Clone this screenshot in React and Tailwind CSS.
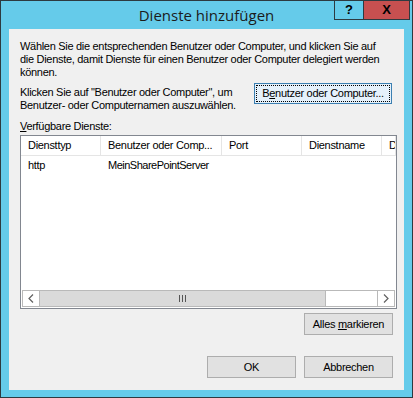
import React from 'react'

function Btn({ children, className = '' }) {
  return (
    <div className={`flex items-center justify-center border border-[#adadad] bg-[#e1e1e1] text-black ${className}`}>
      {children}
    </div>
  )
}

export default function App() {
  const cols = [
    { w: 'w-[80px]', label: 'Diensttyp' },
    { w: 'w-[121px]', label: 'Benutzer oder Comp...' },
    { w: 'w-[80px]', label: 'Port' },
    { w: 'w-[80px]', label: 'Dienstname' },
    { w: 'w-[14px]', label: 'D' },
  ]

  return (
    <div className="w-[413px] h-[398px] bg-white font-['Liberation_Sans',Arial,sans-serif] overflow-hidden">
      <div className="w-[413px] h-[398px] bg-[#65cbea] border border-[#2d3a40] flex flex-col">
        {/* title bar */}
        <div className="h-[28px] shrink-0 flex items-start relative">
          <div className="flex-1 text-center text-[15px] leading-[20px] text-[#1b1b1b] pt-[4px] font-['Open_Sans',sans-serif]">Dienste hinzufügen</div>
          <div className="absolute right-[2px] top-[-1px] flex">
            <div className="w-[29px] h-[20px] border border-[#2d3a40] border-r-0 flex items-center justify-center text-[13px] font-bold text-black">?</div>
            <div className="w-[47px] h-[20px] border border-[#2d3a40] bg-[#c75050] flex items-center justify-center text-[13px] font-bold text-black">X</div>
          </div>
        </div>
        {/* content */}
        <div className="mx-[8px] h-[361px] shrink-0 bg-[#f0f0f0] pl-[11px] pr-[10px] pt-[11px] text-[11px] leading-[13px] tracking-[-0.3px] text-black">
          <p className="whitespace-nowrap">
            Wählen Sie die entsprechenden Benutzer oder Computer, und klicken Sie auf<br />
            die Dienste, damit Dienste für einen Benutzer oder Computer delegiert werden<br />
            können.
          </p>
          <div className="flex justify-between items-start mt-[7px]">
            <p className="whitespace-nowrap">Klicken Sie auf "Benutzer oder Computer", um<br />Benutzer- oder Computernamen auszuwählen.</p>
            <div className="mr-[2px] mt-[-3px] w-[138px] h-[21px] border border-[#3c7fb1] bg-[#e5f1fb] p-[1px]">
              <div className="w-full h-full border border-dotted border-black flex items-center justify-center whitespace-nowrap">
                <span>B<u>e</u>nutzer oder Computer...</span>
              </div>
            </div>
          </div>
          <div className="mt-[8px]"><u>V</u>erfügbare Dienste:</div>
          {/* list view */}
          <div className="mt-[2px] w-[377px] h-[174px] border border-[#828790] bg-white flex flex-col">
            <div className="h-[20px] shrink-0 flex border-b border-[#e5e5e5]">
              {cols.map((c) => (
                <div key={c.label} className={`${c.w} shrink-0 h-full border-r border-[#e5e5e5] pl-[7px] flex items-center overflow-hidden whitespace-nowrap`}>{c.label}</div>
              ))}
            </div>
            <div className="h-[18px] shrink-0 flex items-center whitespace-nowrap">
              <div className="w-[80px] pl-[7px]">http</div>
              <div className="pl-[7px] tracking-[-0.5px]">MeinSharePointServer</div>
            </div>
            <div className="flex-1" />
            <div className="h-[17px] shrink-0 mx-[1px] mb-[1px] flex bg-white border border-[#b9b9b9]">
              <div className="w-[17px] h-full flex items-center justify-center border-r border-[#b9b9b9]">
                <svg width="6" height="9" viewBox="0 0 6 9"><path d="M5 0.5 L1 4.5 L5 8.5" fill="none" stroke="#606060" strokeWidth="1.2" /></svg>
              </div>
              <div className="w-[286px] h-full bg-[#dadada] border-r border-[#b9b9b9] flex items-center justify-center">
                <svg width="7" height="7" viewBox="0 0 7 7"><path d="M0.5 0v7M3.5 0v7M6.5 0v7" stroke="#555" strokeWidth="1" /></svg>
              </div>
              <div className="flex-1" />
              <div className="w-[17px] h-full flex items-center justify-center border-l border-[#b9b9b9]">
                <svg width="6" height="9" viewBox="0 0 6 9"><path d="M1 0.5 L5 4.5 L1 8.5" fill="none" stroke="#606060" strokeWidth="1.2" /></svg>
              </div>
            </div>
          </div>
          <div className="flex justify-end mt-[4px] pr-[1px]">
            <Btn className="w-[89px] h-[22px]"><span>Alles <u>m</u>arkieren</span></Btn>
          </div>
          <div className="flex justify-end gap-[8px] mt-[21px] pr-[1px]">
            <Btn className="w-[89px] h-[22px]">OK</Btn>
            <Btn className="w-[89px] h-[22px]">Abbrechen</Btn>
          </div>
        </div>
      </div>
    </div>
  )
}
